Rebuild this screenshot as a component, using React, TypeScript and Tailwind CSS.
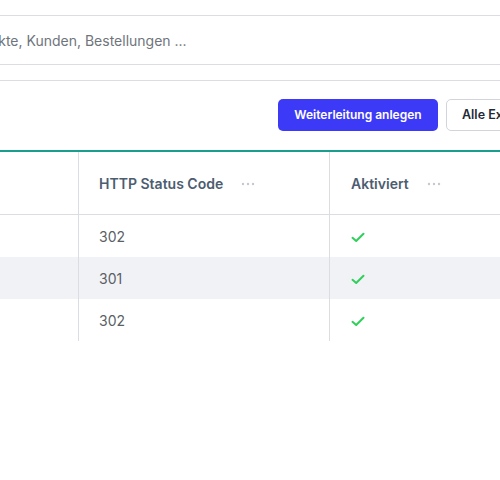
import React from "react";

const Dots = () => (
  <svg width="14" height="4" viewBox="0 0 14 4" className="ml-[18px] shrink-0">
    <circle cx="2" cy="2" r="1.2" fill="#c4c9d0" />
    <circle cx="7" cy="2" r="1.2" fill="#c4c9d0" />
    <circle cx="12" cy="2" r="1.2" fill="#c4c9d0" />
  </svg>
);

const Check = () => (
  <svg width="14" height="11" viewBox="0 0 14 11">
    <path d="M1.5 5.8 L5.2 9 L12.5 1.8" fill="none" stroke="#2fcf5b" strokeWidth="2" strokeLinecap="round" strokeLinejoin="round" />
  </svg>
);

const rows = ["302", "301", "302"];

export default function App() {
  return (
    <div
      className="w-[500px] h-[480px] bg-white overflow-hidden"
      style={{ fontFamily: "Inter, 'Noto Sans', sans-serif" }}
    >
      <div className="h-[15px]" />
      <div className="border-t border-[#dadde1] h-[49px] flex items-center overflow-hidden">
        <span className="ml-[-41px] text-[14px] text-[#6f757c] whitespace-nowrap">
          Produkte, Kunden, Bestellungen ...
        </span>
      </div>
      <div className="border-t border-[#dadde1] h-[16px]" />
      <div className="border-t border-[#dadde1] h-[70px] flex items-start pt-[18px] overflow-hidden">
        <div className="flex gap-2 ml-[278px] shrink-0">
          <button className="h-[32px] w-[160px] rounded-[5px] bg-[#3d3af7] text-white text-[12px] font-semibold whitespace-nowrap">
            Weiterleitung anlegen
          </button>
          <button className="h-[32px] px-[15px] rounded-[5px] border border-[#d1d5db] bg-white text-[#1f2937] text-[12.5px] font-semibold whitespace-nowrap">
            Alle Exportieren
          </button>
        </div>
      </div>
      <div className="border-t-2 border-[#1a9e8e]">
        <div className="grid grid-cols-[79px_251px_1fr]">
          <div className="h-[63px] border-r border-[#dadde1] border-b" />
          <div className="h-[63px] border-r border-[#dadde1] border-b flex items-center pl-[20px] pt-[1px]">
            <span className="text-[14px] font-semibold text-[#4c5d70] whitespace-nowrap">HTTP Status Code</span>
            <Dots />
          </div>
          <div className="h-[63px] border-b border-[#dadde1] flex items-center pl-[21px] pt-[1px]">
            <span className="text-[14px] font-semibold text-[#4c5d70] whitespace-nowrap">Aktiviert</span>
            <Dots />
          </div>
          {rows.map((code, i) => (
            <React.Fragment key={i}>
              <div className={`h-[42px] border-r border-[#dadde1] ${i === 1 ? "bg-[#f1f2f5]" : ""}`} />
              <div className={`h-[42px] border-r border-[#dadde1] flex items-center pl-[20px] text-[14px] text-[#5a5f66] ${i === 1 ? "bg-[#f1f2f5]" : ""}`}>
                {code}
              </div>
              <div className={`h-[42px] flex items-center pl-[21px] pt-[2px] ${i === 1 ? "bg-[#f1f2f5]" : ""}`}>
                <Check />
              </div>
            </React.Fragment>
          ))}
        </div>
      </div>
    </div>
  );
}
